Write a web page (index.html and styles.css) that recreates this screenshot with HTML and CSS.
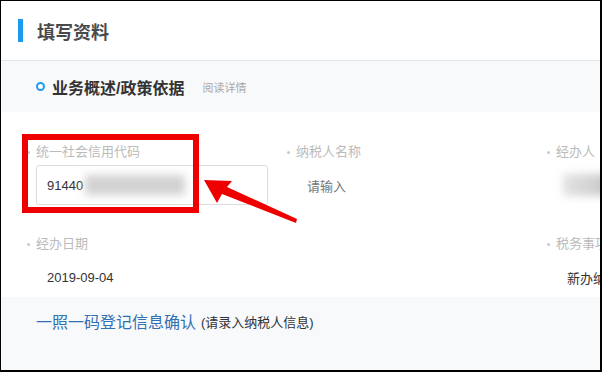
FILE: index.html
```html
<!DOCTYPE html>
<html lang="zh-CN">
<head>
    <meta charset="UTF-8">
    <meta name="viewport" content="width=device-width, initial-scale=1.0">
    <title>填写资料</title>
    <link rel="stylesheet" href="styles.css">
</head>
<body>
    <div class="frame">
        <div class="page-header">
            <span class="bar"></span>
            <h1>填写资料</h1>
        </div>

        <div class="section-head">
            <span class="ring"></span>
            <h2>业务概述/政策依据</h2>
            <a class="more">阅读详情</a>
        </div>

        <div class="form">
            <div class="field">
                <div class="label">统一社会信用代码</div>
                <div class="input bordered">91440<span class="blur"></span></div>
            </div>
            <div class="field">
                <div class="label">纳税人名称</div>
                <div class="input placeholder">请输入</div>
            </div>
            <div class="field">
                <div class="label">经办人</div>
                <div class="input"><span class="blur wide"></span></div>
            </div>
            <div class="field">
                <div class="label">经办日期</div>
                <div class="input">2019-09-04</div>
            </div>
            <div class="field"></div>
            <div class="field">
                <div class="label">税务事项</div>
                <div class="input">新办纳税人</div>
            </div>
        </div>

        <div class="confirm">
            <a class="confirm-link">一照一码登记信息确认</a>
            <span class="hint">(请录入纳税人信息)</span>
        </div>
    </div>

    <!-- annotation drawn on top of the screenshot -->
    <svg class="markup" viewBox="0 0 602 372" width="602" height="372">
        <rect x="25" y="137" width="171" height="73" fill="none" stroke="#ee0000" stroke-width="6"/>
        <polygon points="204,180 232,181 227,187 297,219 296,223 222,194 217,203" fill="#ee0000"/>
    </svg>
</body>
</html>
```

FILE: styles.css
```css
body {
    margin: 0;
    padding: 0;
    position: relative;
    width: 602px;
    height: 372px;
    overflow: hidden;
    font-family: "Liberation Sans", "Noto Sans CJK SC", sans-serif;
    font-size: 13px;
    color: #333;
}
.frame {
    box-sizing: border-box;
    width: 602px;
    height: 372px;
    border-style: solid;
    border-color: #000;
    border-width: 1px 2px 2px 1px;
    background: #fff;
    display: flex;
    flex-direction: column;
    overflow: hidden;
}
.page-header {
    height: 59px;
    flex-shrink: 0;
    border-bottom: 1px solid #e1e7ee;
    display: flex;
    align-items: center;
    padding-left: 17px;
}
.bar {
    width: 5px;
    height: 23px;
    background: #1a9bef;
    margin-right: 14px;
}
.page-header h1 {
    margin: 0;
    font-size: 18px;
    font-weight: bold;
    color: #4a4a4a;
}
.section-head {
    height: 51px;
    flex-shrink: 0;
    background: #f7f9fb;
    display: flex;
    align-items: center;
    padding-left: 35px;
}
.ring {
    box-sizing: border-box;
    width: 9px;
    height: 9px;
    border: 2.5px solid #1d9cf0;
    border-radius: 50%;
    background: #fff;
    margin-right: 7px;
}
.section-head h2 {
    margin: 0;
    font-size: 16px;
    font-weight: bold;
    color: #333;
}
.more {
    margin-left: 18px;
    font-size: 11px;
    color: #aaa;
}
.form {
    display: grid;
    grid-template-columns: 260px 260px 260px;
    row-gap: 29px;
    padding: 30px 0 0 25px;
}
.label {
    height: 20px;
    line-height: 20px;
    margin-bottom: 3px;
    color: #bbb;
    display: flex;
    align-items: center;
    white-space: nowrap;
}
.label::before {
    content: "";
    width: 3px;
    height: 3px;
    border-radius: 50%;
    background: #c8c8c8;
    margin: 0 6px 0 1px;
}
.input {
    box-sizing: border-box;
    width: 232px;
    height: 40px;
    margin-left: 10px;
    padding: 0 10px;
    border: 1px solid transparent;
    border-radius: 3px;
    display: flex;
    align-items: center;
    white-space: nowrap;
    color: #333;
}
.input.bordered {
    border-color: #dcdcdc;
}
.input.placeholder {
    color: #777;
}
.blur {
    display: inline-block;
    width: 100px;
    height: 20px;
    margin-left: 2px;
    background: #d2d2d2;
    filter: blur(4px);
}
.blur.wide {
    width: 60px;
    height: 22px;
    margin-left: -4px;
    background: linear-gradient(to right, #e2e2e2, #cfcfcf 60%, #b39a85);
}
.confirm {
    flex: 1;
    background: #f7f9fb;
    margin-top: auto;
    padding: 16px 0 0 35px;
    display: flex;
    align-items: flex-start;
    line-height: 20px;
}
.confirm-link {
    font-size: 16px;
    color: #3270b4;
}
.hint {
    margin-left: 5px;
    font-size: 13px;
    color: #333;
}
.markup {
    position: absolute;
    top: 0;
    left: 0;
    pointer-events: none;
}
```
